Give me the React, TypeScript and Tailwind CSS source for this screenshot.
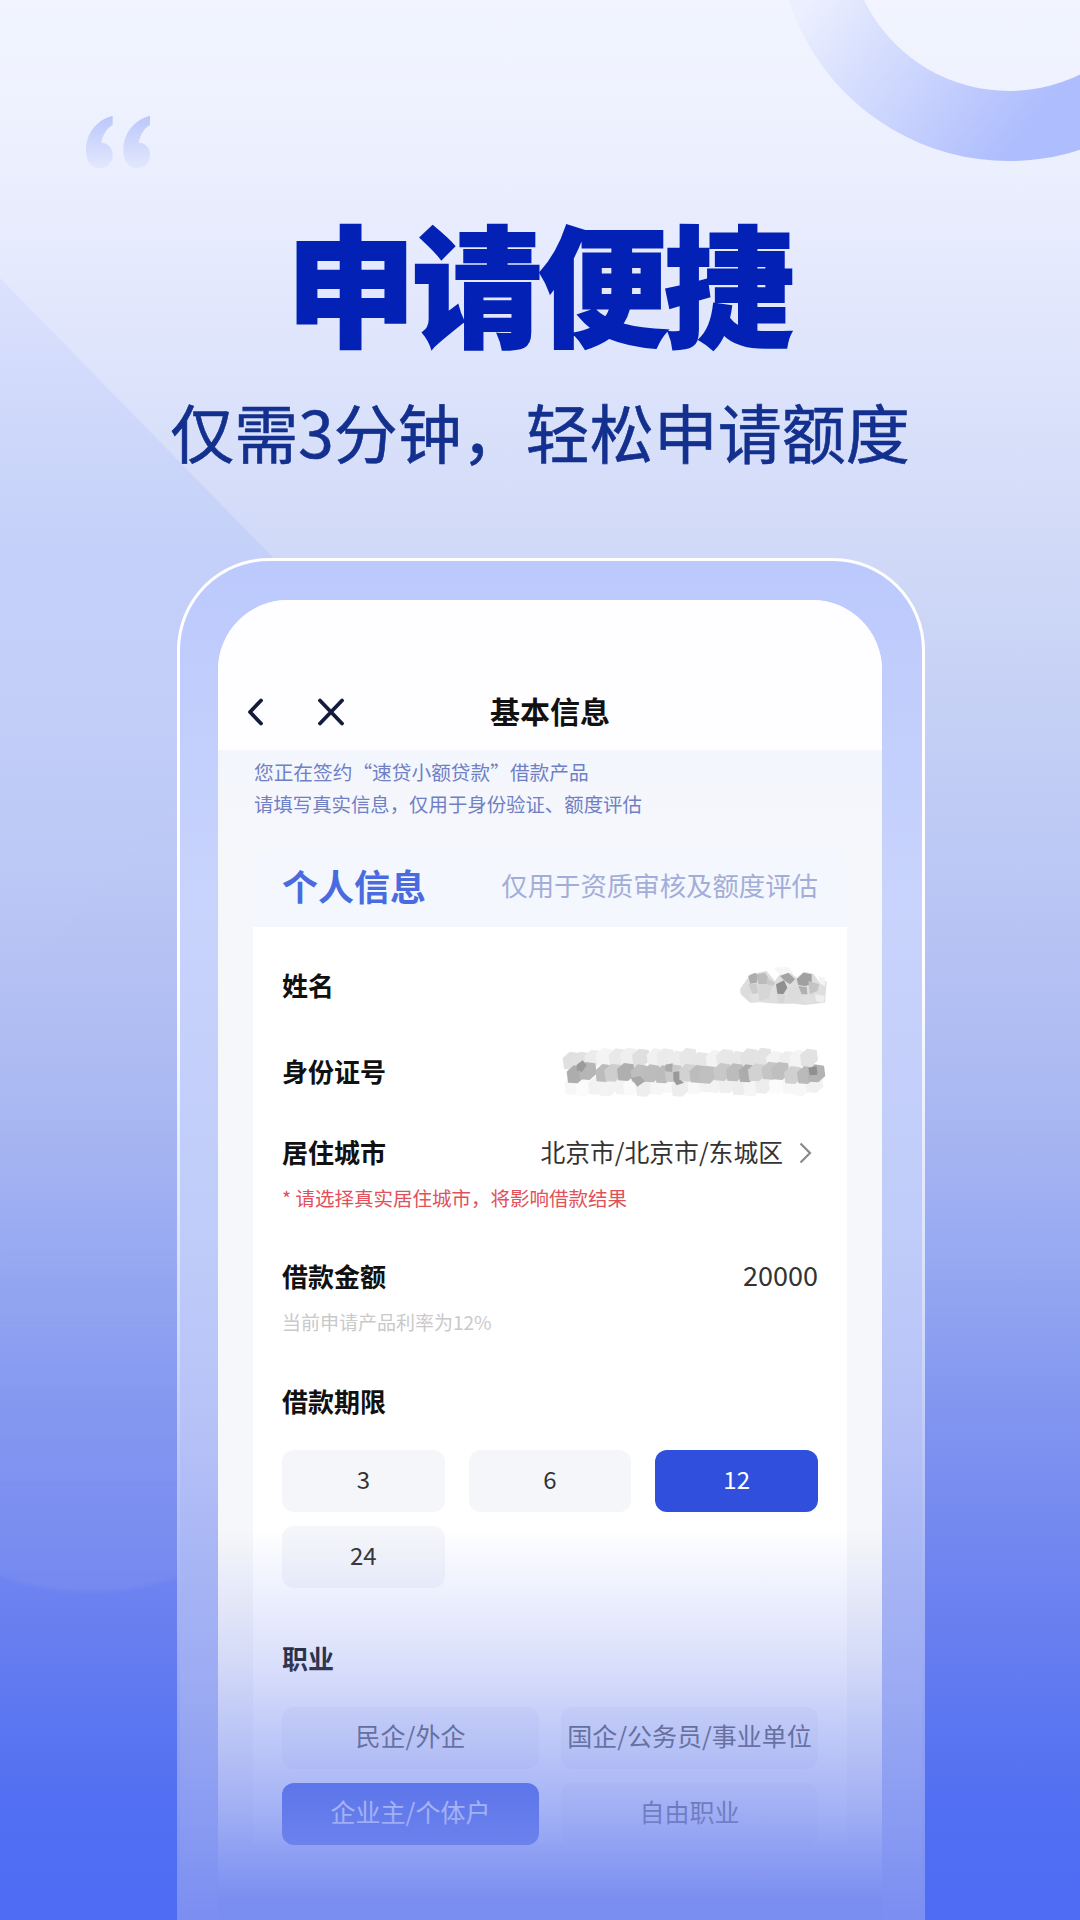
const rng = (seed: number) => () => {
  seed = (seed * 9301 + 49297) % 233280;
  return seed / 233280;
};

// name blur, hand placed from the reference
const nameCells: [string, string][] = [
  ["30,85 60,40 110,30 135,60 150,40 175,30 200,50 222,32 250,38 272,68 290,60 285,125 225,132 195,128 145,128 88,124 60,125 32,100", "#dedede"],
  ["130,20 175,18 190,35 150,42", "#f6f6f6"],
  ["55,45 75,35 85,45 80,65 60,68", "#adadad"],
  ["80,40 105,35 115,50 110,70 85,70", "#bcbcbc"],
  ["110,50 135,65 130,75 112,72", "#c8c8c8"],
  ["35,85 55,75 65,100 50,115", "#dcdcdc"],
  ["55,70 80,68 85,95 68,100", "#cccccc"],
  ["85,72 125,72 118,110 88,120", "#d6d6d6"],
  ["60,100 85,98 88,122 70,125", "#e2e2e2"],
  ["138,70 162,58 172,80 160,100 142,98", "#909090"],
  ["150,45 175,35 195,55 180,70 165,60", "#a4a4a4"],
  ["200,55 220,35 245,40 245,70 225,75 205,72", "#a0a0a0"],
  ["205,75 230,78 232,100 215,100", "#b0b0b0"],
  ["235,60 268,70 262,90 240,100", "#c4c4c4"],
  ["172,80 205,78 212,100 195,125 175,105", "#dcdcdc"],
  ["140,100 165,100 163,125 145,125", "#d6d6d6"],
  ["215,102 240,102 255,118 225,130", "#e0e0e0"],
  ["255,100 285,105 280,125 258,120", "#eeeeee"],
  ["265,45 285,50 285,75 270,68", "#f4f4f4"],
];

// id number blur: three rows of uneven cells, darkest in the middle one
const idCells = (() => {
  const r = rng(17);
  const out: { points: string; fill: string }[] = [];
  const rows = [
    { y: 50, lo: 222, hi: 245 },
    { y: 130, lo: 236, hi: 252 },
    { y: 92, lo: 172, hi: 212 },
  ];
  rows.forEach((row, ri) => {
    for (let x = 30 + ri * 12; x < 785; x += 36) {
      const j = () => (r() - 0.5) * 14;
      const cx = x + j();
      const cy = row.y + j();
      const s = 27;
      const pts = [
        [cx - s, cy - 8],
        [cx - 6, cy - s],
        [cx + s - 4, cy - s + 4],
        [cx + s, cy + 8],
        [cx + 6, cy + s],
        [cx - s + 4, cy + s - 2],
      ];
      const g = Math.round(row.lo + r() * (row.hi - row.lo));
      out.push({
        points: pts.map((p) => `${p[0].toFixed(0)},${p[1].toFixed(0)}`).join(" "),
        fill: `rgb(${g},${g},${g})`,
      });
    }
  });
  return out;
})();

function Decor() {
  return (
    <>
      <svg className="absolute left-0 top-0 w-[1080px] h-[1100px]" viewBox="0 0 1080 1100" fill="none">
        <defs>
          <linearGradient id="ring" gradientUnits="userSpaceOnUse" x1="810" y1="0" x2="1010" y2="150">
            <stop offset="0" stopColor="#ebeffe" />
            <stop offset="1" stopColor="#aebdfd" />
          </linearGradient>
          <linearGradient id="wedge" x1="0" y1="0" x2="0" y2="1">
            <stop offset="0" stopColor="#c2cffb" stopOpacity="0.25" />
            <stop offset="0.4" stopColor="#bccafb" stopOpacity="0.6" />
            <stop offset="1" stopColor="#bccafb" stopOpacity="0" />
          </linearGradient>
        </defs>
        <path
          fillRule="evenodd"
          d="M1009 -301a231 231 0 1 0 0.01 0ZM1009 -231a161 161 0 1 1 -0.01 0Z"
          fill="url(#ring)"
        />
        <polygon points="0,278 340,626 0,1000" fill="url(#wedge)" />
      </svg>
      <svg className="absolute left-[70px] top-[100px] w-[100px] h-[80px]" viewBox="0 0 300 240">
        <defs>
          <linearGradient id="quote" x1="0" y1="0" x2="0" y2="1">
            <stop offset="0" stopColor="#bac7fb" />
            <stop offset="1" stopColor="#e3e8fd" />
          </linearGradient>
        </defs>
        <path
          d="M128 47V75C110 85 98 105 94 128C115 128 128 145 128 165C128 188 110 205 88 205C65 205 48 185 48 150C48 100 80 60 128 47Z"
          fill="url(#quote)"
        />
        <path
          d="M240 47V75C222 85 210 105 206 128C227 128 240 145 240 165C240 188 222 205 200 205C177 205 160 185 160 150C160 100 192 60 240 47Z"
          fill="url(#quote)"
        />
      </svg>
      <div className="absolute left-[-130px] top-[1240px] w-[440px] h-[352px] rounded-[50%] blur-[2px] bg-gradient-to-b from-white/0 to-white/6" />
    </>
  );
}

function Row({ label, children }: { label: string; children?: React.ReactNode }) {
  return (
    <div className="flex items-center justify-between h-[40px]">
      <span className="pb-[4px] text-[26px] font-semibold text-[#111111]">{label}</span>
      {children}
    </div>
  );
}

function Option({ text, active }: { text: string; active?: boolean }) {
  return (
    <div
      className={
        active
          ? "h-[62px] pb-[4px] rounded-[12px] bg-[#2f4fdc] flex items-center justify-center text-[24px] text-white"
          : "h-[62px] pb-[4px] rounded-[12px] bg-[#f5f6fa] flex items-center justify-center text-[24px] text-[#333333]"
      }
    >
      {text}
    </div>
  );
}

function JobOption({ text, active }: { text: string; active?: boolean }) {
  return (
    <div
      className={
        active
          ? "h-[62px] pb-[4px] rounded-[12px] bg-[#2f4fdc] flex items-center justify-center text-[25px] text-white"
          : "h-[62px] pb-[4px] rounded-[12px] bg-[#f5f6fa] flex items-center justify-center text-[25px] text-[#555555]"
      }
    >
      {text}
    </div>
  );
}

export default function App() {
  return (
    <div className="relative w-[1080px] h-[1920px] overflow-hidden flex flex-col font-['Noto_Sans_CJK_SC',sans-serif] bg-[linear-gradient(to_bottom,#f2f5ff_0%,#ecf0fe_8%,#e3e8fd_15%,#d0d9f7_29%,#b9c5f4_47%,#abb9f2_57%,#97a9f1_65.5%,#8094f0_74%,#6a80f0_84%,#516ff2_94%,#4e6cf4_100%)]">
      <Decor />

      <div className="relative pt-[214px] flex flex-col items-center">
        <h1 className="h-[130px] leading-[130px] text-[130px] font-black text-[#0322b5] tracking-[-4px] pr-[4px] [-webkit-text-stroke:2px_#0322b5]">
          申请便捷
        </h1>
        <p className="mt-[46px] h-[80px] leading-[80px] text-[64px] font-normal text-[#13308f] [-webkit-text-stroke:0.6px_#13308f]">
          {"仅需3分钟\uFF0C轻松申请额度"}
        </p>
      </div>

      <div className="relative mt-[88px] ml-[177px] w-[748px] flex-1 min-h-0 flex flex-col rounded-t-[92px] p-[3px] pb-0 bg-[linear-gradient(to_bottom,#ffffff_0%,#ffffff_30%,#e8edff_42%,#d5ddfd_55%,#b3c0f7_70%,#93a3f3_85%,#7b8ef1_100%)]">
        <div className="flex-1 min-h-0 flex flex-col rounded-t-[89px] pl-[38px] pr-[40px] pt-[39px] bg-[linear-gradient(to_bottom,#bcc9fd_0%,#c8d4fc_25%,#c0ccf9_49%,#b7c3f7_63%,#a9b6f5_73%,#9dacf3_82%,#8a9cf2_92%,#7b8ef1_100%)]">
          <div className="relative flex-1 min-h-0 overflow-hidden rounded-t-[70px] bg-[#f6f7fa]">
            <div className="h-[150px] bg-[#fefdff] flex items-end">
              <div className="w-full h-[76px] grid grid-cols-[1fr_auto_1fr] items-center px-[29px]">
                <div className="flex items-center gap-[55px]">
                  <svg width="16" height="28" viewBox="0 0 16 28" fill="none">
                    <path d="M14 2.5L3 14L14 25.5" stroke="#151b3a" strokeWidth="3.8" strokeLinecap="round" strokeLinejoin="round" />
                  </svg>
                  <svg width="26" height="28" viewBox="0 0 26 28" fill="none">
                    <path d="M2 2.5L24 25.5M24 2.5L2 25.5" stroke="#151b3a" strokeWidth="3.8" strokeLinecap="round" />
                  </svg>
                </div>
                <span className="pb-[3px] text-[30px] font-semibold text-[#111111]">基本信息</span>
                <div />
              </div>
            </div>

            <div className="h-[96px] pt-[7px] px-[36px] bg-gradient-to-b from-[#f3f6fd] to-[#f6f7fb]">
              <p className="h-[30px] leading-[30px] text-[19.7px] text-[#6f80c4]">您正在签约“速贷小额贷款”借款产品</p>
              <p className="mt-[2px] h-[30px] leading-[30px] text-[19.4px] text-[#6f80c4]">{"请填写真实信息\uFF0C仅用于身份验证、额度评估"}</p>
            </div>

            <div className="mx-[35px] rounded-t-[24px] bg-white">
              <div className="h-[81px] pb-[4px] rounded-t-[24px] bg-[#f5f7fe] px-[29px] flex items-center justify-between">
                <span className="text-[36px] font-semibold text-[#4a6be0]">个人信息</span>
                <span className="text-[26.4px] text-[#a3aed8]">仅用于资质审核及额度评估</span>
              </div>

              <div className="px-[29px] pt-[39px]">
                <Row label="姓名">
                  <svg className="w-[100px] h-[50px] mr-[-12px] blur-[0.7px]" viewBox="0 0 300 150">
                    {nameCells.map(([points, fill]) => (
                      <polygon key={points} points={points} fill={fill} />
                    ))}
                  </svg>
                </Row>
                <div className="mt-[46px]">
                  <Row label="身份证号">
                    <svg className="w-[270px] h-[60px] mr-[-12px] blur-[0.7px]" viewBox="0 0 810 180">
                      {idCells.map((c) => (
                        <polygon key={c.points} points={c.points} fill={c.fill} />
                      ))}
                      <polygon points="50,68 68,55 80,70 66,90 50,84" fill="#9b9b9b" />
                      <polygon points="745,78 770,72 772,98 750,100" fill="#8f8f8f" />
                      <polygon points="340,90 358,88 358,112 372,122 350,130 340,115" fill="#9a9a9a" />
                      <polygon points="212,108 240,102 255,118 232,134" fill="#a8a8a8" />
                      <polygon points="316,68 338,64 336,90 316,88" fill="#aaaaaa" />
                    </svg>
                  </Row>
                </div>
                <div className="mt-[41px]">
                  <Row label="居住城市">
                    <div className="flex items-center gap-[16px] pr-[6px]">
                      <span className="pb-[3px] text-[24.8px] text-[#333333]">北京市/北京市/东城区</span>
                      <svg width="13" height="22" viewBox="0 0 13 22" fill="none">
                        <path d="M1.5 1.5L11 11L1.5 20.5" stroke="#8a8a8a" strokeWidth="2.2" />
                      </svg>
                    </div>
                  </Row>
                </div>
                <p className="mt-[10px] h-[30px] leading-[30px] text-[19.5px] text-[#e2505a]">{"* 请选择真实居住城市\uFF0C将影响借款结果"}</p>
                <div className="mt-[44px]">
                  <Row label="借款金额">
                    <span className="pb-[3px] text-[27px] text-[#333333]">20000</span>
                  </Row>
                </div>
                <p className="mt-[10px] h-[30px] leading-[30px] text-[19px] text-[#c9c9c9]">当前申请产品利率为12%</p>
                <div className="mt-[45px]">
                  <Row label="借款期限" />
                </div>
                <div className="mt-[28px] grid grid-cols-3 gap-x-[24px] gap-y-[14px]">
                  <Option text="3" />
                  <Option text="6" />
                  <Option text="12" active />
                  <Option text="24" />
                </div>
                <div className="mt-[51px]">
                  <Row label="职业" />
                </div>
                <div className="mt-[28px] grid grid-cols-2 gap-x-[22px] gap-y-[14px]">
                  <JobOption text="民企/外企" />
                  <JobOption text="国企/公务员/事业单位" />
                  <JobOption text="企业主/个体户" active />
                  <JobOption text="自由职业" />
                </div>
              </div>
            </div>

            <div className="absolute inset-x-0 bottom-0 h-[390px] pointer-events-none bg-[linear-gradient(to_bottom,rgba(122,142,241,0)_0%,rgba(122,142,241,0.27)_33%,rgba(122,142,241,0.65)_69%,rgba(122,142,241,1)_95%)]" />
          </div>
        </div>
      </div>
    </div>
  );
}
